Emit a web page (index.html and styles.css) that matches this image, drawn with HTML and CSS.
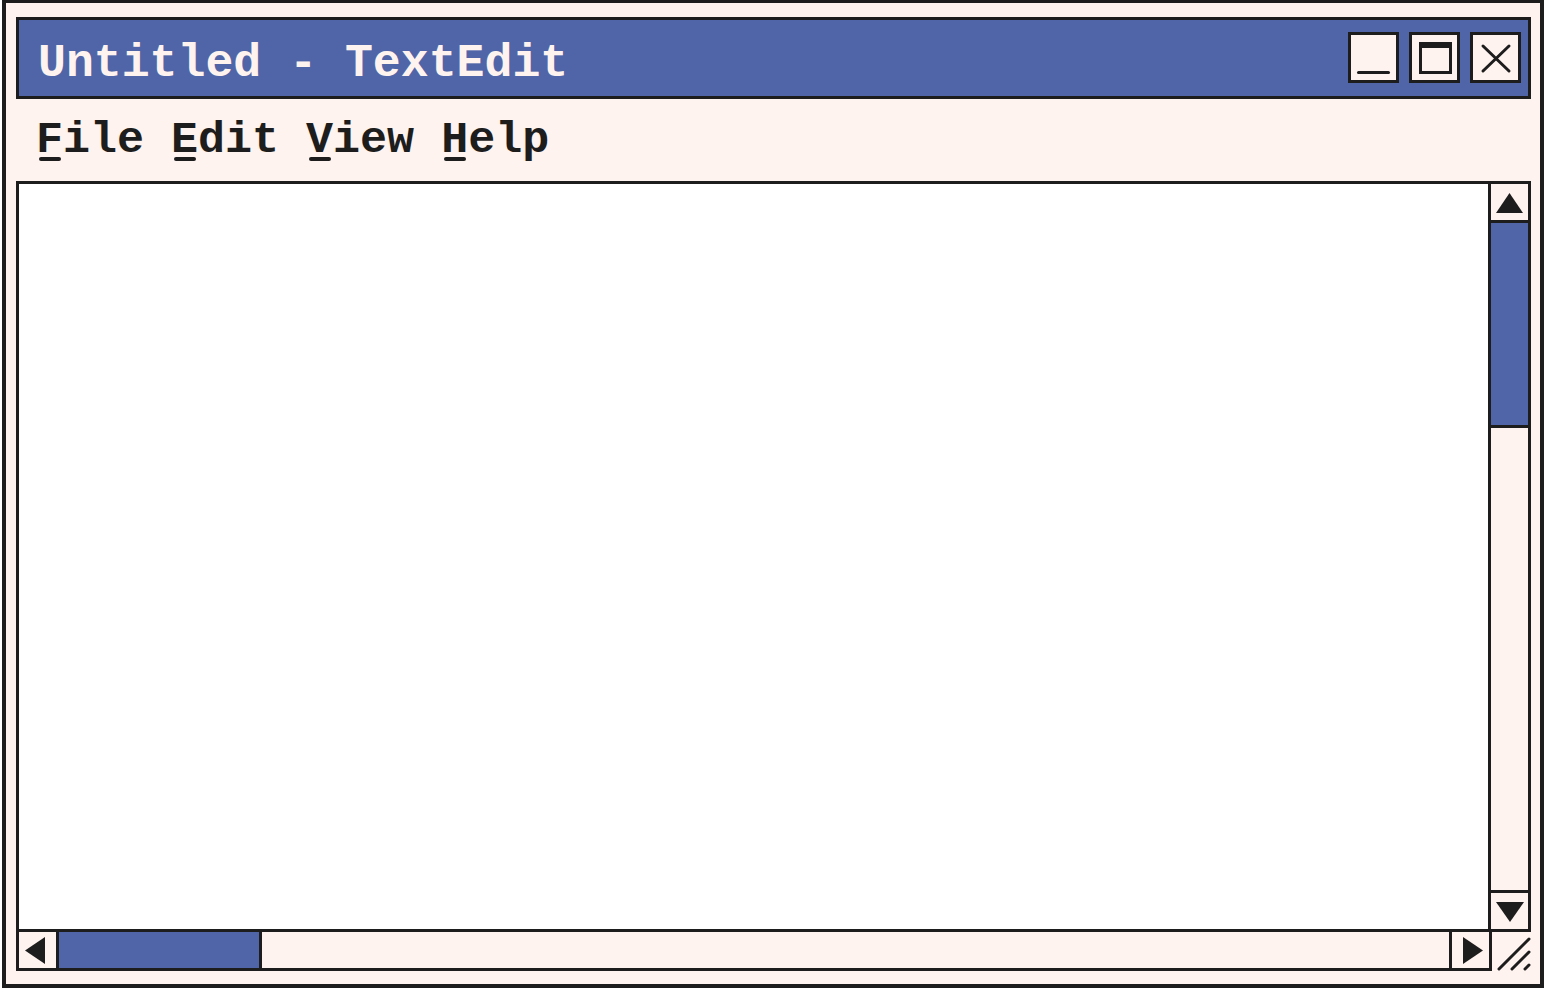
FILE: index.html
```html
<!DOCTYPE html>
<html lang="en">
<head>
    <meta charset="UTF-8">
    <meta name="viewport" content="width=device-width, initial-scale=1.0">
    <title>Untitled - TextEdit</title>
    <link rel="stylesheet" href="styles.css">
</head>
<body>
    <div class="window">
        <div class="titlebar">
            <span class="title">Untitled - TextEdit</span>
            <div class="win-buttons">
                <button class="win-btn" aria-label="Minimize">
                    <svg width="45" height="45" viewBox="0 0 45 45"><line x1="7.5" y1="37.5" x2="37.5" y2="37.5" stroke="#1d1d1d" stroke-width="3" stroke-linecap="round"/></svg>
                </button>
                <button class="win-btn" aria-label="Maximize">
                    <svg width="45" height="45" viewBox="0 0 45 45"><rect x="8.5" y="8.5" width="30" height="29" fill="none" stroke="#1d1d1d" stroke-width="3"/><rect x="7" y="7" width="33" height="6" fill="#1d1d1d"/></svg>
                </button>
                <button class="win-btn" aria-label="Close">
                    <svg width="45" height="45" viewBox="0 0 45 45"><path d="M10 11 L36 36 M36 11 L10 36" stroke="#1d1d1d" stroke-width="3" stroke-linecap="round"/></svg>
                </button>
            </div>
        </div>

        <div class="menubar"><span class="menu-item"><span class="key">F</span>ile</span> <span class="menu-item"><span class="key">E</span>dit</span> <span class="menu-item"><span class="key">V</span>iew</span> <span class="menu-item"><span class="key">H</span>elp</span></div>

        <div class="frame">
            <div class="editor" contenteditable="true"></div>
            <div class="vscroll">
                <div class="arrow-btn up">
                    <svg width="37" height="36" viewBox="0 0 37 36"><polygon points="18.5,9 32,29 5,29" fill="#1d1d1d"/></svg>
                </div>
                <div class="vthumb"></div>
                <div class="vtrack"></div>
                <div class="arrow-btn down">
                    <svg width="37" height="36" viewBox="0 0 37 36"><polygon points="5,9 33,9 19,29" fill="#1d1d1d"/></svg>
                </div>
            </div>
        </div>

        <div class="bottom-row">
            <div class="hscroll">
                <div class="arrow-btn left">
                    <svg width="37" height="36" viewBox="0 0 37 36"><polygon points="26,5 26,32 6,18.5" fill="#1d1d1d"/></svg>
                </div>
                <div class="hthumb"></div>
                <div class="htrack"></div>
                <div class="arrow-btn right">
                    <svg width="37" height="36" viewBox="0 0 37 36"><polygon points="11,5 11,32 31,18.5" fill="#1d1d1d"/></svg>
                </div>
            </div>
            <div class="grip">
                <svg width="39" height="39" viewBox="0 0 39 39">
                    <g stroke="#1d1d1d" stroke-width="3" stroke-linecap="round">
                        <line x1="7" y1="37" x2="37" y2="7"/>
                        <line x1="20" y1="37" x2="37" y2="20"/>
                        <line x1="33" y1="37" x2="37" y2="33"/>
                    </g>
                </svg>
            </div>
        </div>
    </div>
</body>
</html>
```

FILE: styles.css
```css
body { margin: 0; background: #ffffff; font-family: "Liberation Mono", "Courier New", monospace; color: #1d1d1d; }

.window {
    box-sizing: border-box;
    width: 1542px;
    height: 988px;
    margin-left: 2px;
    border: 4px solid #1d1d1d;
    border-top-width: 3px;
    background: #fff3ef;
    padding: 14px 9px 13px 10px;
    display: flex;
    flex-direction: column;
}

.titlebar {
    display: flex;
    align-items: flex-start;
    height: 76px;
    flex: none;
    background: #5065a8;
    border: 3px solid #1d1d1d;
    padding: 0 7px 0 19px;
}
.title { margin-top: 21px; font-size: 46.5px; line-height: 1; font-weight: bold; color: #fff3ef; white-space: pre; }
.win-buttons { margin-left: auto; margin-top: 12px; display: flex; gap: 10px; }
.win-btn {
    width: 51px; height: 51px; padding: 0;
    border: 3px solid #1d1d1d; background: #fff3ef;
    display: flex; align-items: center; justify-content: center;
}
.win-btn svg { display: block; }

.menubar {
    height: 82px; flex: none;
    box-sizing: border-box;
    padding: 19px 0 0 20px;
    font-size: 45px; line-height: 1; font-weight: bold; white-space: pre;
}
.key { position: relative; }
.key::after {
    content: ""; position: absolute; left: 3px; width: 22px; height: 4px;
    bottom: 5px; background: #1d1d1d; border-radius: 2px;
}

.frame {
    flex: 1; min-height: 0;
    display: flex;
    border: 3px solid #1d1d1d;
}
.editor { flex: 1; background: #ffffff; outline: none; }

.vscroll { width: 37px; border-left: 3px solid #1d1d1d; display: flex; flex-direction: column; background: #fff3ef; }
.vthumb { height: 202px; background: #5065a8; border-bottom: 3px solid #1d1d1d; }
.vtrack { flex: 1; }
.arrow-btn { width: 37px; height: 36px; flex: none; background: #fff3ef; }
.arrow-btn svg { display: block; }
.arrow-btn.up { border-bottom: 3px solid #1d1d1d; }
.arrow-btn.down { border-top: 3px solid #1d1d1d; }

.bottom-row { display: flex; align-items: flex-end; margin-top: -3px; flex: none; }
.hscroll { flex: 1; display: flex; height: 36px; border: 3px solid #1d1d1d; }
.hthumb { width: 200px; background: #5065a8; border-right: 3px solid #1d1d1d; }
.htrack { flex: 1; }
.arrow-btn.left { border-right: 3px solid #1d1d1d; }
.arrow-btn.right { border-left: 3px solid #1d1d1d; }
.grip { width: 39px; height: 39px; }
.grip svg { display: block; }
```
